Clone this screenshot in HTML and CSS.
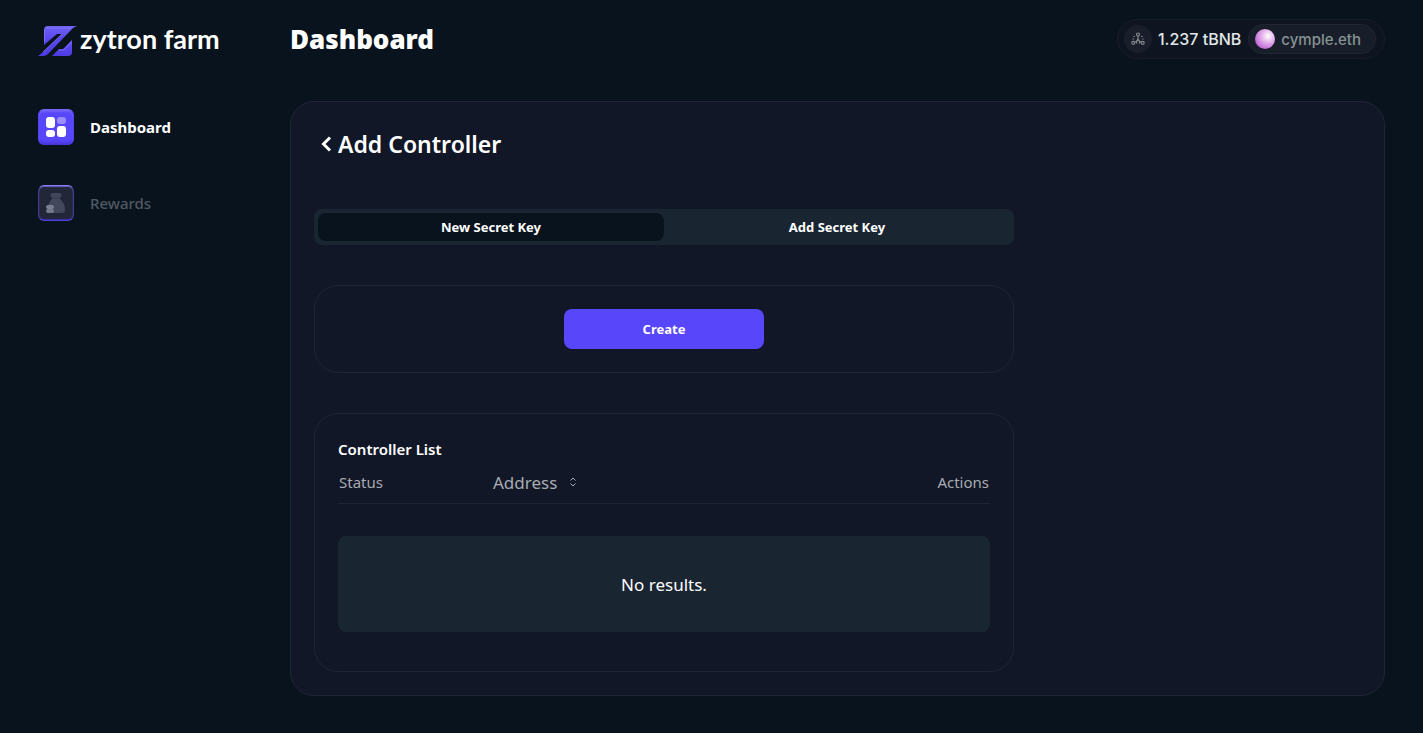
FILE: index.html
```html
<!DOCTYPE html>
<html lang="en">
<head>
<meta charset="utf-8">
<meta name="viewport" content="width=device-width, initial-scale=1">
<title>Zytron Farm - Dashboard</title>
<link rel="stylesheet" href="styles.css">
</head>
<body>
<div class="app">
  <aside class="sidebar">
    <a class="brand" href="#">
      <svg class="brand-mark" viewBox="0 0 40 32" aria-hidden="true">
        <defs>
          <linearGradient id="mark" x1="0" y1="0" x2="0" y2="1">
            <stop offset="0" stop-color="#7263f3"/>
            <stop offset=".4" stop-color="#5a49f2"/>
            <stop offset="1" stop-color="#4c3be0"/>
          </linearGradient>
        </defs>
        <g fill="url(#mark)">
          <path d="M10 1H39Q36 2 34 4L10 29Q8 31 5 31H0Q3 29 5 27L24 9H19L6 20V5Q6 1 10 1Z"/>
          <path d="M34 15V27Q34 31 30 31H14L21 24H25Z"/>
        </g>
        <path d="M8 3H33M6.500 5V17M24 9L5 27M33 17L26 25H21" fill="none" stroke="#8d81f8" stroke-width=".8" opacity=".8"/>
      </svg>
      <span class="brand-name">zytron farm</span>
    </a>
    <nav class="nav">
      <a class="nav-link active" href="#" aria-current="page">
        <span class="nav-icon">
          <svg viewBox="0 0 36 36" aria-hidden="true">
            <g fill="#fff"><rect x="8" y="8" width="9" height="11" rx="3"/><rect x="8" y="21" width="9" height="7" rx="3"/><rect x="19" y="17" width="9" height="11" rx="3"/></g>
            <rect x="19" y="8" width="9" height="7" rx="3" fill="#9b8cff"/>
          </svg>
        </span>
        Dashboard
      </a>
      <a class="nav-link" href="#">
        <span class="nav-icon">
          <svg viewBox="0 0 36 36" aria-hidden="true">
            <path d="M15 8H21Q23.500 8 23.500 10.500T21 13Q27 18 27 25Q27 28 24 28H12Q9 28 9 25Q10 17 15 13Q12.500 13 12.500 10.500T15 8Z" fill="#43475b"/>
            <path d="M14 13H22" stroke="#393d51"/>
            <rect x="8" y="20" width="8" height="4" rx="2" fill="#7b7f91"/>
            <rect x="8" y="24" width="8" height="4" rx="2" fill="#747889"/>
          </svg>
        </span>
        Rewards
      </a>
    </nav>
  </aside>

  <main class="main">
    <header class="topbar">
      <h1 class="page-title">Dashboard</h1>
      <div class="wallet">
        <button class="network" type="button" aria-label="Network">
          <svg viewBox="0 0 14 14" fill="none" stroke="#858a8e" stroke-width="1.200" aria-hidden="true">
            <circle cx="7" cy="2.500" r="1.500"/><circle cx="2.300" cy="10.800" r="1.500"/><circle cx="11.700" cy="10.800" r="1.500"/>
            <path d="M7 4V7M5.500 11.500V9.500L7 7L8.500 9.500V11.500M3.600 10L5.500 9.500M10.400 10L8.500 9.500M2.500 4.500H4M10 4.500H11.500M1.500 7H3M11 7H12.500"/>
          </svg>
        </button>
        <span class="balance">1.237 tBNB</span>
        <button class="account" type="button"><span class="avatar"></span>cymple.eth</button>
      </div>
    </header>

    <section class="panel">
      <h2 class="panel-title">
        <a class="back" href="#" aria-label="Back"><svg viewBox="0 0 12 16" aria-hidden="true"><path d="M10 1.500L3.500 8L10 14.500" fill="none" stroke="#fff" stroke-width="3"/></svg></a>
        Add Controller
      </h2>
      <div class="content">
        <div class="tabs" role="tablist">
          <button class="tab selected" type="button" role="tab" aria-selected="true">New Secret Key</button>
          <button class="tab" type="button" role="tab" aria-selected="false">Add Secret Key</button>
        </div>
        <div class="card create-card">
          <button class="create" type="button">Create</button>
        </div>
        <div class="card list-card">
          <h3 class="list-title">Controller List</h3>
          <table class="list">
            <thead>
              <tr>
                <th class="col-status">Status</th>
                <th class="col-address">
                  <button class="sort" type="button">Address
                    <svg viewBox="0 0 8 12" fill="none" stroke="#aaadb3" aria-hidden="true"><path d="M1.500 4.500L4 2L6.500 4.500M1.500 7.500L4 10L6.500 7.500"/></svg>
                  </button>
                </th>
                <th class="col-actions">Actions</th>
              </tr>
            </thead>
            <tbody>
              <tr><td class="empty-cell" colspan="3"><div class="empty">No results.</div></td></tr>
            </tbody>
          </table>
        </div>
      </div>
    </section>
  </main>
</div>
</body>
</html>
```
FILE: styles.css
```css
* { box-sizing: border-box; }

body {
  margin: 0;
  background: #09131e;
  color: #fff;
  font-family: "Noto Sans", "Open Sans", sans-serif;
  font-size: 16px;
}

a { color: inherit; text-decoration: none; }
button { border: 0; margin: 0; padding: 0; font: inherit; color: inherit; background: none; cursor: pointer; }
h1, h2, h3 { margin: 0; }
svg { display: block; }

.app {
  display: grid;
  grid-template-columns: 252px minmax(0, 1fr);
  min-height: 100vh;
  padding: 19px 38px 37px;
}

.brand { display: flex; align-items: center; gap: 2px; height: 44px; }
.brand-mark { width: 40px; height: 32px; }
.brand-name { padding-bottom: 4px; font: 700 27px/32px Lato, sans-serif; white-space: nowrap; }

.nav { display: flex; flex-direction: column; gap: 40px; margin-top: 46px; }
.nav-link { display: flex; align-items: center; gap: 16px; font-size: 15px; font-weight: 500; color: #505963; }
.nav-link.active { color: #fff; font-weight: 700; }
.nav-icon {
  width: 36px;
  height: 36px;
  border: 1px solid #443c91;
  border-top-color: #8c7df5;
  border-bottom-color: #5141d8;
  border-radius: 6px;
  background: #212638;
  box-shadow: inset 0 1px 1px #675dbb, inset 0 -1px 1px #3b319f;
}
.nav-icon svg { width: 36px; height: 36px; margin: -1px; }
.active .nav-icon {
  border-color: #5543f1;
  border-top-color: #7769f5;
  border-bottom-color: #4635d5;
  background: #5846fb;
  box-shadow: inset 0 2px 2px #7263f8, inset 0 -2px 2px #4b3add;
}

.topbar { display: flex; align-items: center; justify-content: space-between; height: 40px; }
.page-title { font-size: 26px; line-height: 40px; font-weight: 900; }

.wallet {
  display: flex;
  align-items: center;
  height: 40px;
  padding: 0 8px 0 6px;
  border: 1px solid #171c29;
  border-radius: 20px;
  background: #0f1520;
  font-family: Inter, sans-serif;
  font-weight: 500;
}
.network { display: grid; place-items: center; width: 28px; height: 28px; border-radius: 50%; background: #191e2a; }
.network svg { width: 14px; height: 14px; }
.balance { margin: 0 7px 0 6px; color: #e1e7e8; }
.account {
  display: flex;
  align-items: center;
  gap: 6px;
  height: 30px;
  padding: 0 14px 0 6px;
  border: 1px solid #202632;
  border-radius: 15px;
  background: #181e29;
  color: #879293;
  font-size: 15px;
}
.avatar { width: 20px; height: 20px; border-radius: 50%; background: radial-gradient(circle at 65% 35%, #fff, #e5b2ea 35%, #c46fd8 70%, #b154c8); }

.panel {
  margin-top: 42px;
  padding: 23px;
  border: 1px solid #1f2534;
  border-radius: 24px;
  background: #111726;
}
.panel-title { display: flex; align-items: center; gap: 6px; height: 38px; padding-left: 6px; font-size: 23px; font-weight: 600; }
.back svg { width: 12px; height: 16px; }

.content { display: flex; flex-direction: column; gap: 40px; max-width: 700px; margin-top: 46px; }
.tabs { display: flex; padding: 4px; border-radius: 8px; background: #1a2532; }
.tab { flex: 1; height: 28px; border-radius: 8px; font-size: 13px; font-weight: 700; }
.tab.selected { background: #09131e; }

.card { border: 1px solid #1f2534; border-radius: 24px; padding: 23px; }
.create-card { display: flex; justify-content: center; }
.create { width: 200px; height: 40px; border-radius: 8px; background: #5846fb; font-size: 13px; font-weight: 700; }

.list-card { padding-bottom: 39px; }
.list-title { font-size: 15px; line-height: 24px; font-weight: 600; }
.list { width: 100%; border-spacing: 0; table-layout: fixed; }
.list th { height: 43px; padding: 0 1px; border-bottom: 1px solid #1a2532; font-weight: 400; text-align: left; color: #a8abb1; font-size: 15px; }
.list .col-status { width: 154px; }
.list .col-actions { width: 120px; text-align: right; }
.sort { display: flex; align-items: center; gap: 12px; font-size: 17px; }
.sort svg { width: 8px; height: 12px; }
.empty-cell { padding: 32px 0 0; }
.empty { display: grid; place-items: center; height: 96px; border-radius: 8px; background: #1a2532; font-size: 17px; }
```
